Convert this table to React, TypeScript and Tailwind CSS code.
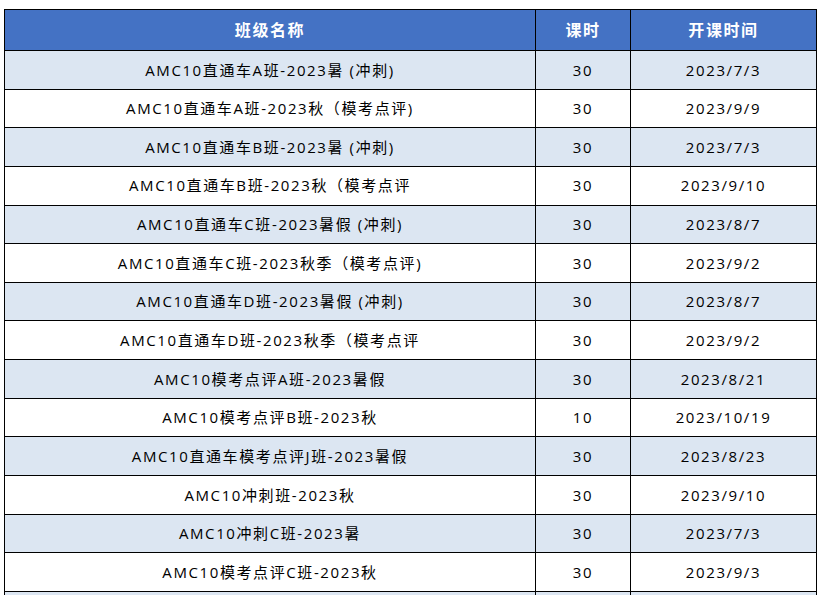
import React from "react";

const rows: [string, string, string][] = [
  ["AMC10直通车A班-2023暑 (冲刺)", "30", "2023/7/3"],
  ["AMC10直通车A班-2023秋（模考点评)", "30", "2023/9/9"],
  ["AMC10直通车B班-2023暑 (冲刺)", "30", "2023/7/3"],
  ["AMC10直通车B班-2023秋（模考点评", "30", "2023/9/10"],
  ["AMC10直通车C班-2023暑假 (冲刺)", "30", "2023/8/7"],
  ["AMC10直通车C班-2023秋季（模考点评)", "30", "2023/9/2"],
  ["AMC10直通车D班-2023暑假 (冲刺)", "30", "2023/8/7"],
  ["AMC10直通车D班-2023秋季（模考点评", "30", "2023/9/2"],
  ["AMC10模考点评A班-2023暑假", "30", "2023/8/21"],
  ["AMC10模考点评B班-2023秋", "10", "2023/10/19"],
  ["AMC10直通车模考点评J班-2023暑假", "30", "2023/8/23"],
  ["AMC10冲刺班-2023秋", "30", "2023/9/10"],
  ["AMC10冲刺C班-2023暑", "30", "2023/7/3"],
  ["AMC10模考点评C班-2023秋", "30", "2023/9/3"],
  ["", "", ""],
];

export default function App() {
  return (
    <div
      className="w-[819px] h-[595px] overflow-hidden bg-white pt-[9px] pl-[4px]"
      style={{ fontFamily: '"Open Sans", "Noto Sans CJK SC", sans-serif' }}
    >
      <table className="border-collapse table-fixed w-[812px] text-[15px] tracking-[1.6px] text-black">
        <colgroup>
          <col className="w-[531px]" />
          <col className="w-[95px]" />
          <col className="w-[186px]" />
        </colgroup>
        <thead>
          <tr className="h-[41px] bg-[#4472c4] text-white text-[16px] font-bold">
            <th className="border border-black text-center font-bold">班级名称</th>
            <th className="border border-black text-center font-bold">课时</th>
            <th className="border border-black text-center font-bold">开课时间</th>
          </tr>
        </thead>
        <tbody>
          {rows.map((r, i) => (
            <tr
              key={i}
              className={`h-[38.65px] ${i % 2 === 0 ? "bg-[#dce6f2]" : "bg-white"}`}
            >
              <td className="border border-black text-center p-0">{r[0]}</td>
              <td className="border border-black text-center p-0">{r[1]}</td>
              <td className="border border-black text-center p-0">{r[2]}</td>
            </tr>
          ))}
        </tbody>
      </table>
    </div>
  );
}
